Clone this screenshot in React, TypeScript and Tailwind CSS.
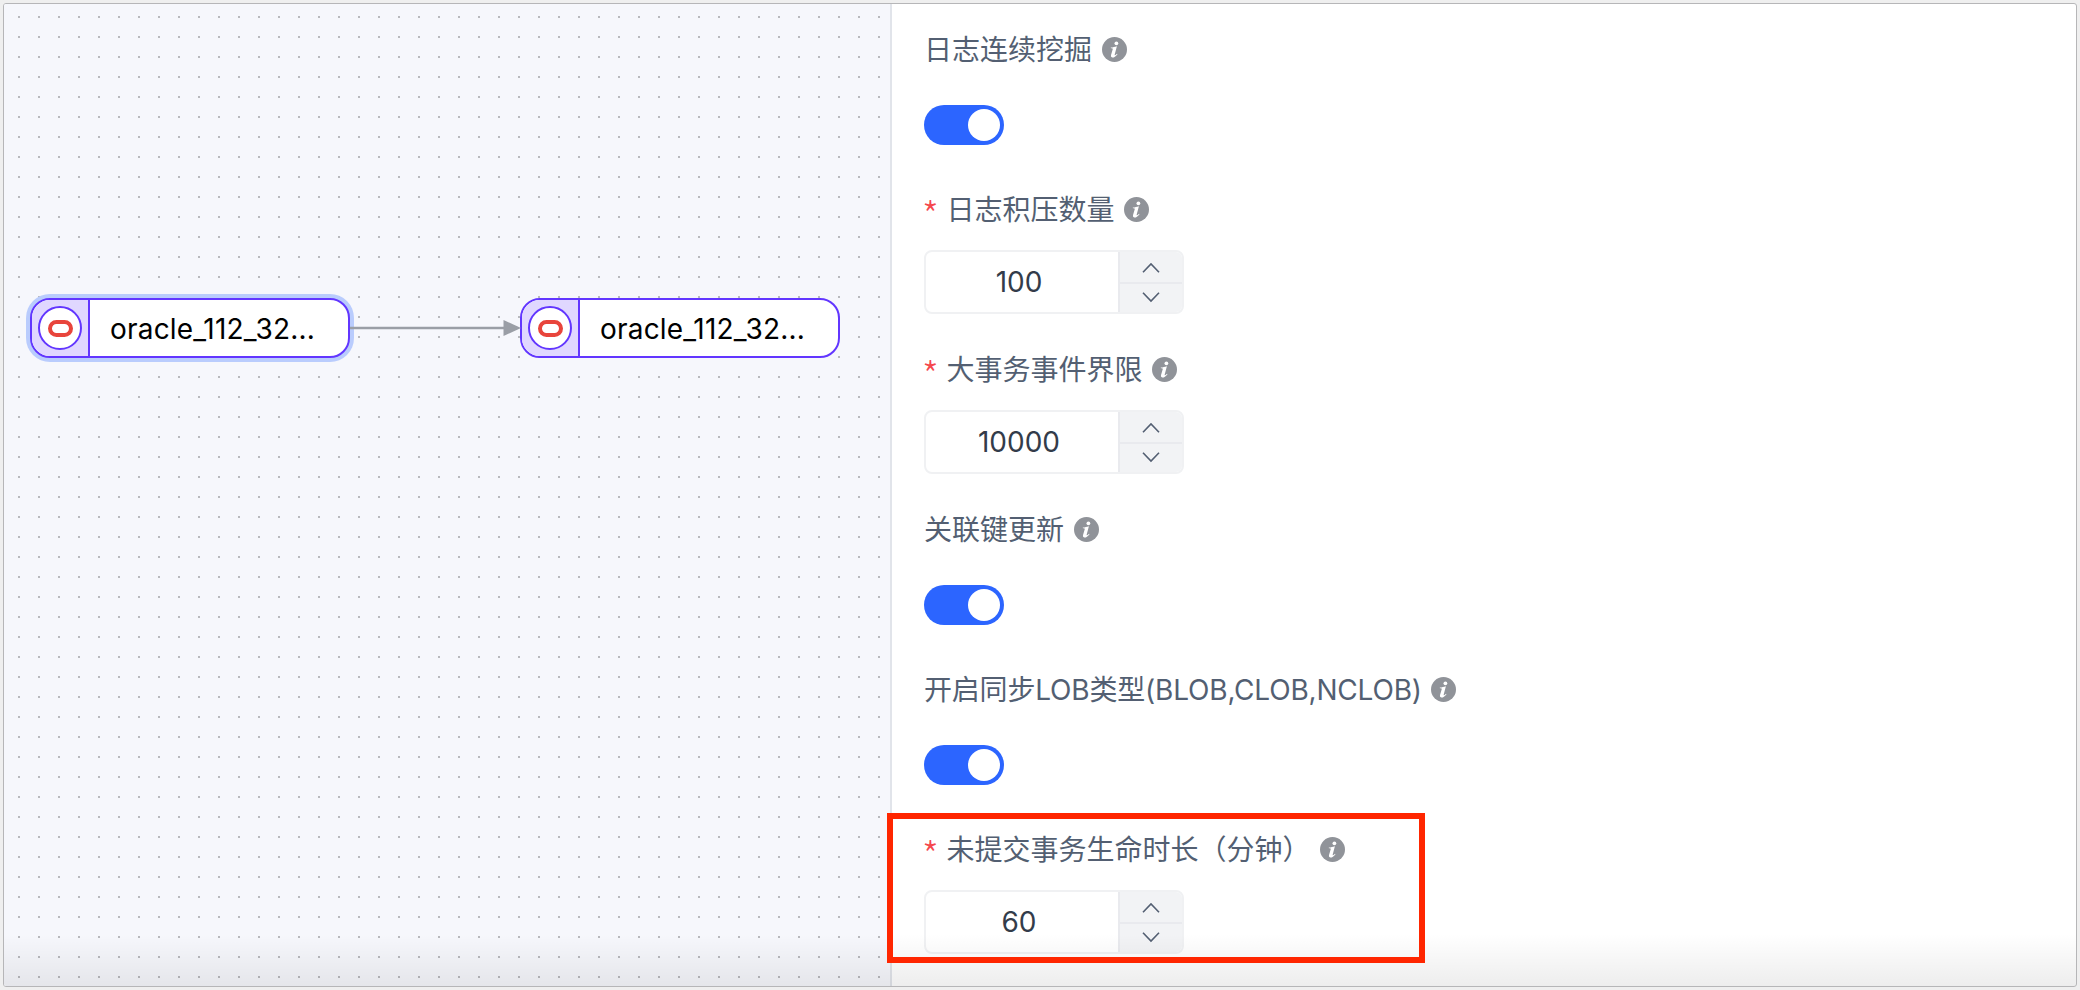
import React from "react";

const OracleNode = ({ selected = false }: { selected?: boolean }) => (
  <div
    className={
      "flex h-[60px] w-[320px] overflow-hidden rounded-[20px] border-2 border-[#6236ff] bg-white " +
      (selected ? "shadow-[0_0_0_4px_#b9ccfd]" : "")
    }
  >
    <div className="flex w-[58px] shrink-0 items-center justify-center border-r-2 border-[#6236ff] bg-[#e0d7ff]">
      <div className="flex size-11 items-center justify-center rounded-full border-2 border-[#6236ff] bg-white">
        <div className="h-[17px] w-[25px] rounded-full border-4 border-[#e8453c]" />
      </div>
    </div>
    <div className="flex flex-1 items-center whitespace-nowrap pl-5 pt-0.5 text-[28px] tracking-[0.2px] text-black">
      oracle_112_32...
    </div>
  </div>
);

const InfoIcon = () => (
  <svg viewBox="0 0 24 24" className="mb-px size-[25px] shrink-0">
    <circle cx="12" cy="12" r="12" fill="#909399" />
    <circle cx="13.8" cy="6.1" r="1.8" fill="#fff" />
    <path
      d="M8.5 10.1C10.6 9.9 12 9.5 14.3 8.8L12.2 16.8C11.9 18 12.5 17.9 14.4 16L14.9 16.5C12.9 19 11.3 19.9 9.9 19.7C8.4 19.5 8.4 18.2 8.8 16.9L10.3 11.7C10.5 10.9 10.1 10.8 8.5 10.8Z"
      fill="#fff"
    />
  </svg>
);

const Switch = () => (
  <div className="mt-[15px] flex h-10 w-20 items-center justify-end rounded-full bg-[#2c65ff] p-1">
    <div className="size-8 rounded-full bg-white" />
  </div>
);

const NumberInput = ({ value }: { value: string }) => (
  <div className="flex h-16 w-[260px] overflow-hidden rounded-lg border-2 border-[#f0f1f3] bg-white">
    <div className="flex flex-1 items-center justify-center pr-1.5 text-[28px] text-[#333c4a]">{value}</div>
    <div className="flex w-16 flex-col border-l-2 border-[#e9eaee] bg-[#f2f3f5]">
      <div className="flex h-8 items-center justify-center border-b-2 border-[#e9eaee]">
        <svg viewBox="0 0 18 12" className="mt-px h-3 w-[18px]" fill="none" stroke="#535f72" strokeWidth="1.6">
          <path d="M1 10.2 9 2l8 8.2" />
        </svg>
      </div>
      <div className="flex h-7 items-center justify-center">
        <svg viewBox="0 0 18 12" className="-mt-0.5 h-3 w-[18px]" fill="none" stroke="#535f72" strokeWidth="1.6">
          <path d="M1 1.8 9 10l8-8.2" />
        </svg>
      </div>
    </div>
  </div>
);

type Field = { label: string; value?: string; tight?: boolean };

const fields: Field[] = [
  { label: "日志连续挖掘" },
  { label: "日志积压数量", value: "100" },
  { label: "大事务事件界限", value: "10000" },
  { label: "关联键更新" },
  { label: "开启同步LOB类型(BLOB,CLOB,NCLOB)", tight: true },
  { label: "未提交事务生命时长（分钟）", value: "60" },
];

const FormItem = ({ label, value, tight }: Field) => (
  <div className="h-40">
    <div className="flex h-20 items-center whitespace-nowrap text-[28px] text-[#535f72]">
      {value && (
        <span className="-ml-0.5 w-[24.5px] shrink-0 pt-2 font-['Noto_Sans_CJK_SC',sans-serif] text-[38px] font-light leading-10 text-[#f5474d]">
          *
        </span>
      )}
      <span className={tight ? "mr-[9.5px] tracking-[-0.19px]" : "mr-[9.5px]"}>{label}</span>
      <InfoIcon />
    </div>
    {value ? <NumberInput value={value} /> : <Switch />}
  </div>
);

export default function App() {
  return (
    <div className="h-[990px] w-[2080px] overflow-hidden bg-[#efefef] p-[3px] font-['Inter','Noto_Sans_CJK_SC',sans-serif]">
      <div className="relative flex h-[984px] w-[2074px] overflow-hidden rounded-[3px] border border-[#b6b6b8] bg-white">
        <div className="relative w-[886px] shrink-0 bg-[#f6f7fc]">
          <svg className="absolute inset-0 h-full w-full">
            <defs>
              <pattern id="grid" x="14" y="12" width="20" height="20" patternUnits="userSpaceOnUse">
                <rect width="2" height="2" fill="#b8b9bd" />
              </pattern>
            </defs>
            <rect width="100%" height="100%" fill="url(#grid)" />
          </svg>
          <div className="absolute left-[26px] top-[294px]">
            <OracleNode selected />
          </div>
          <div className="absolute left-[516px] top-[294px]">
            <OracleNode />
          </div>
          <svg className="absolute left-[346px] top-[314px] h-5 w-[171px]" viewBox="0 0 171 20">
            <path d="M0 10H157" stroke="#9a9ea6" strokeWidth="2.4" />
            <path d="M153.5 2 171 10 153.5 18Z" fill="#9a9ea6" />
          </svg>
        </div>
        <div className="flex-1 border-l-2 border-[#e1e4ea] pl-8 pt-1.5">
          {fields.map((field) => (
            <FormItem key={field.label} {...field} />
          ))}
        </div>
        <div className="pointer-events-none absolute inset-x-0 bottom-0 h-13 bg-linear-to-b from-transparent to-black/7" />
        <div className="pointer-events-none absolute left-[883px] top-[809px] h-[150px] w-[538px] border-6 border-[#ff2600]" />
      </div>
    </div>
  );
}
